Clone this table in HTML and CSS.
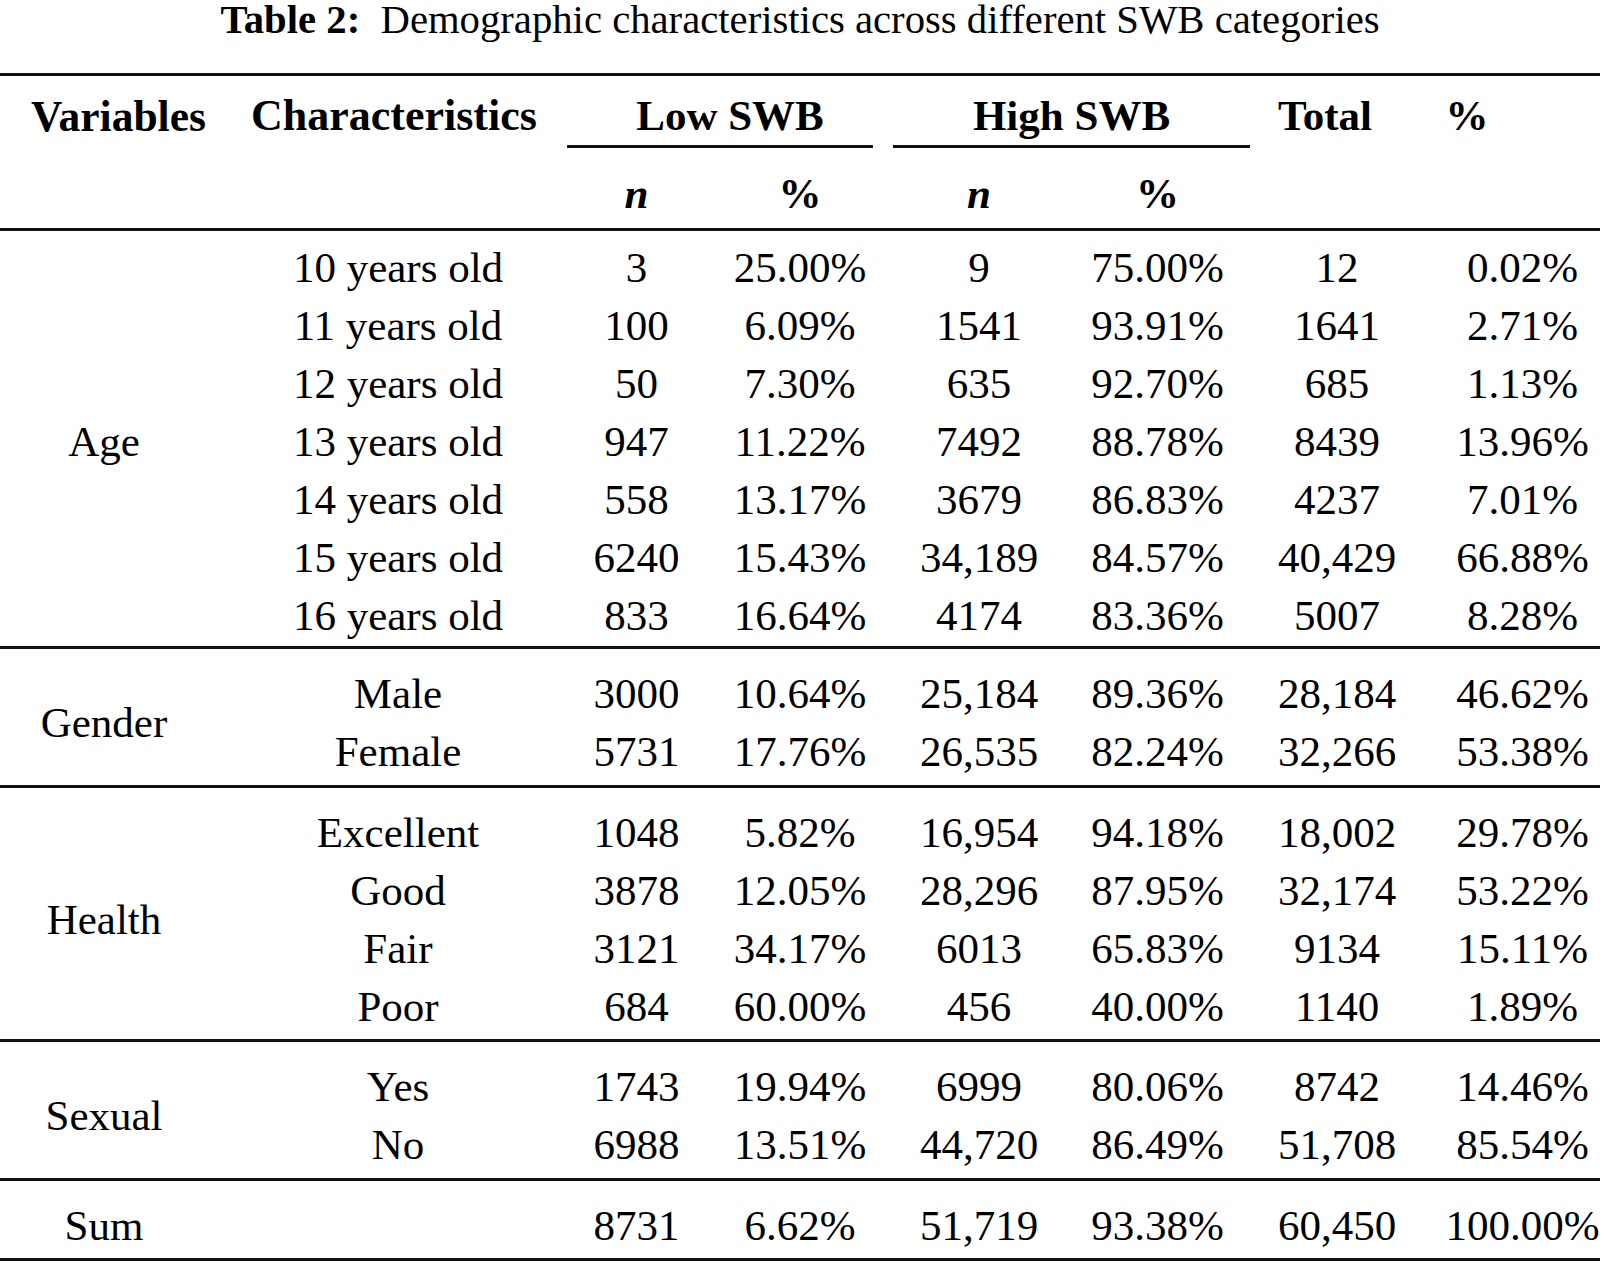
FILE: index.html
```html
<!DOCTYPE html>
<html lang="en">
<head>
<meta charset="utf-8">
<title>Table 2</title>
<link rel="stylesheet" href="styles.css">
</head>
<body>
<div class="caption"><b>Table 2:</b>&nbsp; Demographic characteristics across different SWB categories</div>
<table class="swb">
  <colgroup>
    <col class="w1"><col class="w2"><col class="w3"><col class="w4"><col class="w5"><col class="w6"><col class="w7"><col class="w8">
  </colgroup>
  <thead>
    <tr class="h1">
      <th class="hv">Variables</th>
      <th class="hc">Characteristics</th>
      <th colspan="2" class="hg"><div class="grp low">Low SWB</div></th>
      <th colspan="2" class="hg"><div class="grp high">High SWB</div></th>
      <th class="ht">Total</th>
      <th class="hp">%</th>
    </tr>
    <tr class="h2">
      <th></th><th></th>
      <th><i>n</i></th><th>%</th>
      <th><i>n</i></th><th>%</th>
      <th></th><th></th>
    </tr>
  </thead>
  <tbody class="age">
    <tr><td rowspan="7">Age</td><td>10 years old</td><td>3</td><td>25.00%</td><td>9</td><td>75.00%</td><td>12</td><td>0.02%</td></tr>
    <tr><td>11 years old</td><td>100</td><td>6.09%</td><td>1541</td><td>93.91%</td><td>1641</td><td>2.71%</td></tr>
    <tr><td>12 years old</td><td>50</td><td>7.30%</td><td>635</td><td>92.70%</td><td>685</td><td>1.13%</td></tr>
    <tr><td>13 years old</td><td>947</td><td>11.22%</td><td>7492</td><td>88.78%</td><td>8439</td><td>13.96%</td></tr>
    <tr><td>14 years old</td><td>558</td><td>13.17%</td><td>3679</td><td>86.83%</td><td>4237</td><td>7.01%</td></tr>
    <tr><td>15 years old</td><td>6240</td><td>15.43%</td><td>34,189</td><td>84.57%</td><td>40,429</td><td>66.88%</td></tr>
    <tr><td>16 years old</td><td>833</td><td>16.64%</td><td>4174</td><td>83.36%</td><td>5007</td><td>8.28%</td></tr>
  </tbody>
  <tbody>
    <tr><td rowspan="2">Gender</td><td>Male</td><td>3000</td><td>10.64%</td><td>25,184</td><td>89.36%</td><td>28,184</td><td>46.62%</td></tr>
    <tr><td>Female</td><td>5731</td><td>17.76%</td><td>26,535</td><td>82.24%</td><td>32,266</td><td>53.38%</td></tr>
  </tbody>
  <tbody>
    <tr><td rowspan="4">Health</td><td>Excellent</td><td>1048</td><td>5.82%</td><td>16,954</td><td>94.18%</td><td>18,002</td><td>29.78%</td></tr>
    <tr><td>Good</td><td>3878</td><td>12.05%</td><td>28,296</td><td>87.95%</td><td>32,174</td><td>53.22%</td></tr>
    <tr><td>Fair</td><td>3121</td><td>34.17%</td><td>6013</td><td>65.83%</td><td>9134</td><td>15.11%</td></tr>
    <tr><td>Poor</td><td>684</td><td>60.00%</td><td>456</td><td>40.00%</td><td>1140</td><td>1.89%</td></tr>
  </tbody>
  <tbody>
    <tr><td rowspan="2">Sexual</td><td>Yes</td><td>1743</td><td>19.94%</td><td>6999</td><td>80.06%</td><td>8742</td><td>14.46%</td></tr>
    <tr><td>No</td><td>6988</td><td>13.51%</td><td>44,720</td><td>86.49%</td><td>51,708</td><td>85.54%</td></tr>
  </tbody>
  <tbody class="sum">
    <tr><td>Sum</td><td></td><td>8731</td><td>6.62%</td><td>51,719</td><td>93.38%</td><td>60,450</td><td>100.00%</td></tr>
  </tbody>
</table>
</body>
</html>
```

FILE: styles.css
```css
html, body {
  margin: 0;
  padding: 0;
  background: #ffffff;
}

body {
  width: 1600px;
  font-family: "Liberation Serif", "Times New Roman", serif;
  color: #000;
}

.caption {
  font-size: 40.7px;
  line-height: 40px;
  height: 40px;
  text-align: center;
  white-space: nowrap;
  margin-bottom: 32.5px;
}

.swb {
  width: 1600px;
  table-layout: fixed;
  border-collapse: separate;
  border-spacing: 0;
  font-size: 43px;
  line-height: 58px;
}

.w1 { width: 251px; }
.w2 { width: 266px; }
.w3 { width: 201px; }
.w4 { width: 172px; }
.w5 { width: 178px; }
.w6 { width: 179px; }
.w7 { width: 183px; }
.w8 { width: 170px; }

.swb th,
.swb td {
  padding: 0;
  text-align: center;
  white-space: nowrap;
  vertical-align: top;
}

.swb th {
  font-weight: bold;
}

/* header row 1 */
.h1 th {
  border-top: 3px solid #111;
  padding-top: 11px;
}
.h1 .hv { padding-right: 14px; font-size: 43.5px; }
.h1 .hc { font-size: 44px; }
.h1 .ht { padding-right: 27px; }
.h1 .hp { padding-right: 96px; }

.grp {
  border-bottom: 3px solid #111;
  padding-bottom: 0;
}
.grp.low {
  margin-left: 50px;
  margin-right: 17px;
  padding-left: 20px;
}
.grp.high {
  margin-left: 3px;
  margin-right: -3px;
}

/* header row 2 */
.h2 th {
  padding-top: 17px;
  padding-bottom: 5px;
}

/* column placement */
.swb td:nth-last-child(8) { padding-right: 43px; }
.swb td:nth-last-child(7),
.h2 th:nth-last-child(7) { padding-left: 28px; }
.swb td:nth-last-child(6),
.h2 th:nth-last-child(6) { padding-left: 38px; }
.swb td:nth-last-child(5),
.h2 th:nth-last-child(5) { padding-right: 8px; }
.swb td:nth-last-child(2),
.h2 th:nth-last-child(2) { padding-right: 3px; }
.swb td:nth-last-child(1),
.h2 th:nth-last-child(1) { padding-left: 15px; }

/* groups */
.swb tbody tr:first-child td {
  border-top: 3px solid #111;
  padding-top: 16px;
}
.swb tbody tr:last-child td,
.swb td[rowspan] {
  padding-bottom: 3.5px;
}
.swb td[rowspan] {
  vertical-align: middle;
}

.swb tbody.age tr:first-child td { padding-top: 8px; }
.swb tbody.age tr:last-child td,
.swb tbody.age td[rowspan] { padding-bottom: 1.5px; }

.swb tbody.sum td {
  border-bottom: 3px solid #111;
}
```
